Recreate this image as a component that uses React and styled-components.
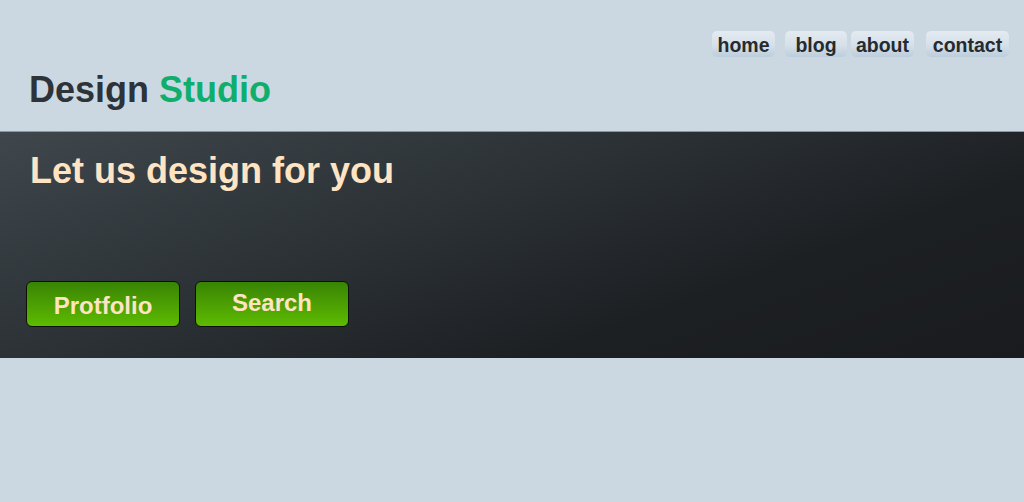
import React from "react";
import styled, { createGlobalStyle } from "styled-components";

const GlobalStyle = createGlobalStyle`
  html, body {
    margin: 0;
    padding: 0;
    background: #cbd8e2;
    font-family: "Liberation Sans", Arial, sans-serif;
  }
`;

const Page = styled.div`
  width: 1024px;
  height: 502px;
  background: #cbd8e2;
  overflow: hidden;
`;

const Header = styled.header`
  height: 131px;
  display: flex;
  flex-direction: column;
  box-sizing: border-box;
  padding: 31px 15px 0 29px;
`;

const Nav = styled.nav`
  display: flex;
  justify-content: flex-end;
`;

const NavItem = styled.a`
  display: flex;
  align-items: center;
  justify-content: center;
  height: 26px;
  width: ${({ $w }) => $w}px;
  margin-left: ${({ $ml }) => $ml}px;
  padding-top: 2px;
  box-sizing: border-box;
  border-radius: 5px;
  background: linear-gradient(to bottom, #e4ebf1 0%, #d6e0e9 55%, #bccddc 100%);
  color: #262b2f;
  font-size: 19.5px;
  font-weight: bold;
  text-decoration: none;
  cursor: pointer;
`;

const Logo = styled.h1`
  margin: 11px 0 0;
  font-size: 36px;
  font-weight: bold;
  color: #2d3338;
  line-height: 44px;
`;

const Accent = styled.span`
  color: #0fae6c;
`;

const Band = styled.section`
  height: 227px;
  box-sizing: border-box;
  border-top: 1px solid #8d969c;
  background: linear-gradient(160deg, #3f474c 0%, #2b3135 40%, #1d2023 70%, #191b1e 100%);
  padding: 17px 0 0 26px;
  display: flex;
  flex-direction: column;
`;

const Heading = styled.h2`
  margin: 0 0 0 4px;
  font-size: 36px;
  font-weight: bold;
  line-height: 44px;
  color: #ffe4c4;
`;

const Actions = styled.div`
  display: flex;
  gap: 15px;
  margin-top: 88px;
`;

const Button = styled.button`
  width: 154px;
  height: 46px;
  box-sizing: border-box;
  border: 1px solid #0d1106;
  border-radius: 6px;
  background: linear-gradient(to bottom, #388405 0%, #4c9f02 50%, #5dbb00 100%);
  color: #ffe4c4;
  font-family: "Liberation Sans", Arial, sans-serif;
  font-size: 24px;
  font-weight: bold;
  padding: ${({ $low }) => ($low ? "3px 0 0" : "0 0 2px")};
  cursor: pointer;
`;

const links = [
  { label: "home", w: 63, ml: 0 },
  { label: "blog", w: 62, ml: 10 },
  { label: "about", w: 63, ml: 4 },
  { label: "contact", w: 83, ml: 12 },
];

export default function App() {
  return (
    <Page>
      <GlobalStyle />
      <Header>
        <Nav>
          {links.map((l) => (
            <NavItem key={l.label} $w={l.w} $ml={l.ml}>
              {l.label}
            </NavItem>
          ))}
        </Nav>
        <Logo>
          Design <Accent>Studio</Accent>
        </Logo>
      </Header>
      <Band>
        <Heading>Let us design for you</Heading>
        <Actions>
          <Button $low>Protfolio</Button>
          <Button>Search</Button>
        </Actions>
      </Band>
    </Page>
  );
}
